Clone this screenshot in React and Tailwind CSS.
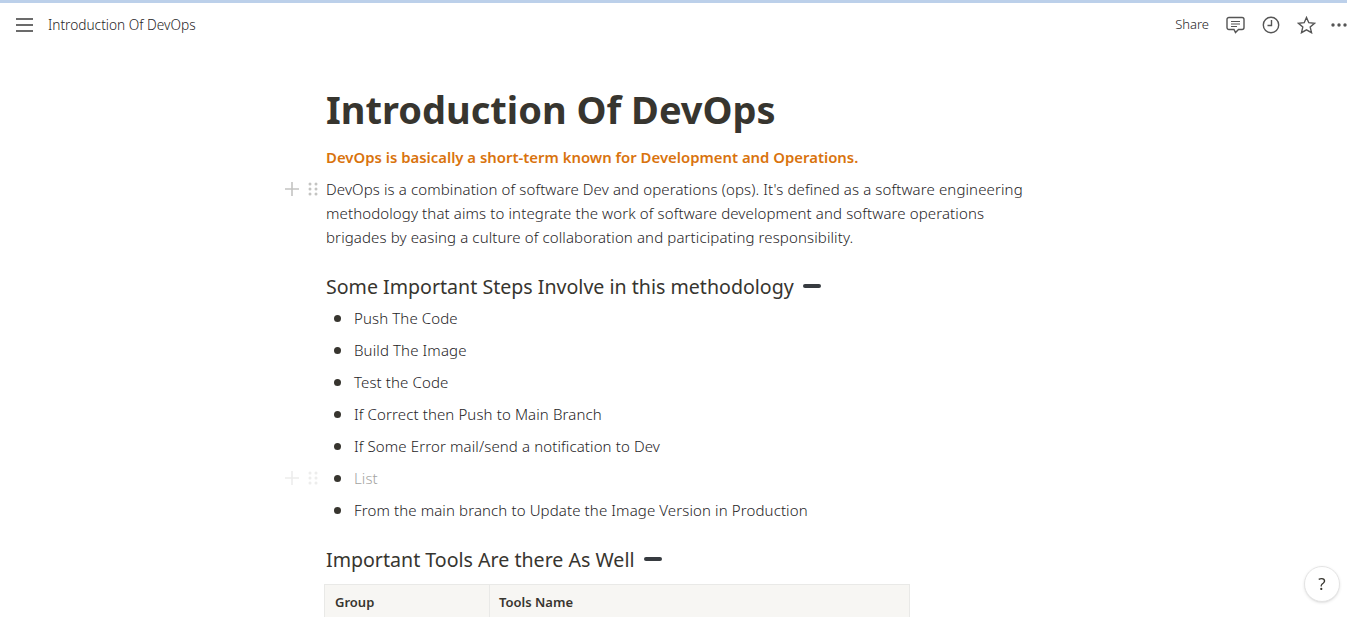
import React from 'react';

const bullets = [
  'Push The Code',
  'Build The Image',
  'Test the Code',
  'If Correct then Push to Main Branch',
  'If Some Error mail/send a notification to Dev',
  'List',
  'From the main branch to Update the Image Version in Production',
];

const Handle = ({ faded }) => (
  <div className={`absolute left-[-41px] flex items-center gap-[9px] ${faded ? 'top-[9px] opacity-30' : 'top-[5px]'}`}>
    <svg width="14" height="14" viewBox="0 0 14 14" fill="none" stroke="#c4c4c2" strokeWidth="1.6">
      <path d="M7 0v14M0 7h14" />
    </svg>
    <svg width="10" height="14" viewBox="0 0 10 14" fill="#c4c4c2">
      <circle cx="2" cy="2" r="1.5" /><circle cx="8" cy="2" r="1.5" />
      <circle cx="2" cy="7" r="1.5" /><circle cx="8" cy="7" r="1.5" />
      <circle cx="2" cy="12" r="1.5" /><circle cx="8" cy="12" r="1.5" />
    </svg>
  </div>
);

const Dash = () => <span className="inline-block ml-[9px] w-[18px] h-[4px] rounded-full bg-[#373b40] align-middle relative top-[-3px]" />;

export default function App() {
  return (
    <div className="h-screen overflow-hidden bg-white text-[#37352f] font-['Noto_Sans','Open_Sans',sans-serif]">
      <div className="h-[3px] bg-[#bcd0ea]" />
      <header className="flex items-center justify-between h-[44px] pl-[16px]">
        <div className="flex items-center gap-[15px]">
          <svg width="17" height="14" viewBox="0 0 17 14" fill="#6b6b6b">
            <rect y="0" width="17" height="2" /><rect y="6" width="17" height="2" /><rect y="12" width="17" height="2" />
          </svg>
          <span className="text-[13.7px] font-light text-[#26241f]">Introduction Of DevOps</span>
        </div>
        <div className="flex items-center">
          <span className="text-[13px] font-light text-[#26241f] mr-[17px]">Share</span>
          <svg className="mr-[17px]" width="19" height="18" viewBox="0 0 19 18" fill="none" stroke="#555" strokeWidth="1.4">
            <path d="M3 1.500h13a2 2 0 0 1 2 2v8a2 2 0 0 1-2 2h-3.500L9.500 16.500l-1.500-3H3a2 2 0 0 1-2-2v-8a2 2 0 0 1 2-2z" />
            <path d="M5 5.500h9M5 8h9M5 10.500h6" strokeWidth="1.100" />
          </svg>
          <svg className="mr-[17px]" width="18" height="18" viewBox="0 0 18 18" fill="none" stroke="#555" strokeWidth="1.4">
            <circle cx="9" cy="9" r="7.700" />
            <path d="M9.500 4v5.500H5.500" />
          </svg>
          <svg className="mr-[15px]" width="19" height="18" viewBox="0 0 19 18" fill="none" stroke="#555" strokeWidth="1.4">
            <path d="M9.500 1.500l2.300 5.200 5.700.6-4.300 3.800 1.300 5.600-5-2.900-5 2.900 1.300-5.600L1.500 7.300l5.700-.6z" />
          </svg>
          <svg width="16" height="4" viewBox="0 0 16 4" fill="#555">
            <circle cx="2" cy="2" r="1.700" /><circle cx="8" cy="2" r="1.700" /><circle cx="14" cy="2" r="1.700" />
          </svg>
        </div>
      </header>

      <main className="ml-[326px] w-[708px]">
        <h1 className="mt-[34px] text-[38px] leading-[56px] font-bold">Introduction Of DevOps</h1>
        <p className="mt-[8px] text-[14.9px] leading-[24px] font-semibold text-[#d9730d]">
          DevOps is basically a short-term known for Development and Operations.
        </p>
        <div className="relative mt-[8px]">
          <Handle />
          <p className="text-[15px] leading-[24px] tracking-[0.12px] font-light text-[#26241f]">
            DevOps is a combination of software Dev and operations (ops). It's defined as a software engineering
            methodology that aims to integrate the work of software development and software operations
            brigades by easing a culture of collaboration and participating responsibility.
          </p>
        </div>

        <h2 className="mt-[24px] text-[19.6px] leading-[28px] font-normal">
          Some Important Steps Involve in this methodology<Dash />
        </h2>
        <ul className="mt-[1px]">
          {bullets.map((b) => (
            <li key={b} className="relative flex items-center h-[32px] text-[15px] tracking-[0.12px] font-light text-[#26241f]">
              {b === 'List' && <Handle faded />}
              <span className="w-[7px] h-[7px] rounded-full bg-[#37352f] ml-[8px] mr-[13px]" />
              <span className={b === 'List' ? 'text-[#a3a3a1]' : ''}>{b}</span>
            </li>
          ))}
        </ul>

        <h2 className="mt-[20px] text-[19.6px] leading-[28px] font-normal">
          Important Tools Are there As Well<Dash />
        </h2>
        <div className="mt-[10px] ml-[-2px] w-[586px] flex bg-[#f7f6f3] border border-[#e9e9e7] text-[13px] font-semibold">
          <div className="w-[165px] px-[10px] py-[8px] border-r border-[#e9e9e7]">Group</div>
          <div className="flex-1 px-[9px] py-[8px]">Tools Name</div>
        </div>
      </main>

      <div className="fixed right-[7px] bottom-[15px] w-[36px] h-[36px] rounded-full bg-white border border-[#e4e4e4] shadow-sm flex items-center justify-center text-[17px]">
        ?
      </div>
    </div>
  );
}
